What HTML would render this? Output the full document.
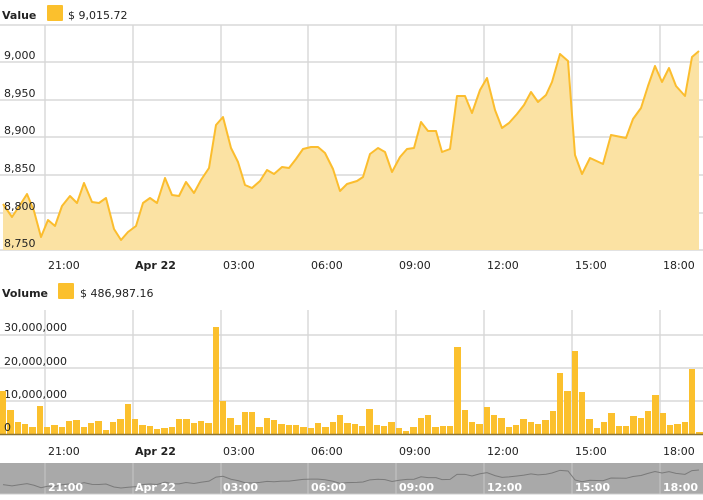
<!DOCTYPE html>
<html><head><meta charset="utf-8"><style>
html,body{margin:0;padding:0;background:#fff;width:703px;height:500px;overflow:hidden;font-family:"DejaVu Sans","Liberation Sans",sans-serif;}
svg{position:absolute;left:0;top:0}
text{font-family:"DejaVu Sans","Liberation Sans",sans-serif;font-size:11px;fill:#222}
.b{font-weight:bold}
#bars{position:absolute;left:0;top:300px;width:703px;height:134px;display:flex;align-items:flex-end}
#bars div{flex:1;background:#fbc02d;margin-right:1px}
</style></head><body>
<svg width="703" height="500">
<g stroke="#e3e3e3" stroke-width="2">
<line x1="45" y1="25" x2="45" y2="250"/><line x1="133" y1="25" x2="133" y2="250"/><line x1="221" y1="25" x2="221" y2="250"/><line x1="308" y1="25" x2="308" y2="250"/><line x1="396" y1="25" x2="396" y2="250"/><line x1="484" y1="25" x2="484" y2="250"/><line x1="572" y1="25" x2="572" y2="250"/><line x1="660" y1="25" x2="660" y2="250"/>
<line x1="45" y1="310" x2="45" y2="434"/><line x1="133" y1="310" x2="133" y2="434"/><line x1="221" y1="310" x2="221" y2="434"/><line x1="308" y1="310" x2="308" y2="434"/><line x1="396" y1="310" x2="396" y2="434"/><line x1="484" y1="310" x2="484" y2="434"/><line x1="572" y1="310" x2="572" y2="434"/><line x1="660" y1="310" x2="660" y2="434"/>
</g>
<g stroke="#d8d8d8" stroke-width="1.5">
<line x1="0" y1="25" x2="703" y2="25"/><line x1="0" y1="62" x2="703" y2="62"/><line x1="0" y1="100" x2="703" y2="100"/><line x1="0" y1="137" x2="703" y2="137"/><line x1="0" y1="175" x2="703" y2="175"/><line x1="0" y1="213" x2="703" y2="213"/><line x1="0" y1="250" x2="703" y2="250"/>
<line x1="0" y1="335" x2="703" y2="335"/><line x1="0" y1="368" x2="703" y2="368"/><line x1="0" y1="401" x2="703" y2="401"/>
</g>
<polygon fill="#fbe2a3" points="3,250 3,204 12,217 20,205 27,194 34,211 41,237 48,220 55,226 62,206 70,196 77,203 84,183 92,202 99,203 106,198 114,229 121,240 128,232 136,226 143,203 150,198 157,203 165,178 172,195 179,196 186,182 194,193 201,180 209,168 216,125 223,117 231,148 238,162 245,185 252,188 260,181 267,170 274,174 282,167 289,168 296,159 303,149 311,147 318,147 325,153 333,169 340,191 347,184 357,181 363,177 370,154 378,148 385,152 392,172 400,157 407,149 414,148 421,122 428,131 436,131 442,152 450,149 457,96 465,96 472,113 480,90 487,78 495,110 502,128 509,123 517,114 524,105 531,92 538,102 546,95 552,82 560,54 568,61 575,155 582,174 590,158 603,164 611,135 626,138 633,119 641,108 648,86 655,66 662,82 669,68 676,86 685,96 692,57 699,51 699,250"/>
<polyline fill="none" stroke="#fbbd2e" stroke-width="2" stroke-linejoin="round" points="3,204 12,217 20,205 27,194 34,211 41,237 48,220 55,226 62,206 70,196 77,203 84,183 92,202 99,203 106,198 114,229 121,240 128,232 136,226 143,203 150,198 157,203 165,178 172,195 179,196 186,182 194,193 201,180 209,168 216,125 223,117 231,148 238,162 245,185 252,188 260,181 267,170 274,174 282,167 289,168 296,159 303,149 311,147 318,147 325,153 333,169 340,191 347,184 357,181 363,177 370,154 378,148 385,152 392,172 400,157 407,149 414,148 421,122 428,131 436,131 442,152 450,149 457,96 465,96 472,113 480,90 487,78 495,110 502,128 509,123 517,114 524,105 531,92 538,102 546,95 552,82 560,54 568,61 575,155 582,174 590,158 603,164 611,135 626,138 633,119 641,108 648,86 655,66 662,82 669,68 676,86 685,96 692,57 699,51"/>
<text x="2" y="19" class="b">Value</text>
<rect x="47" y="5" width="16" height="16" fill="#fbc02d" rx="1"/>
<text x="68" y="19">$ 9,015.72</text>
<text x="4" y="59">9,000</text><text x="4" y="97">8,950</text><text x="4" y="134">8,900</text><text x="4" y="172">8,850</text><text x="4" y="210">8,800</text><text x="4" y="247">8,750</text>
<g>
<text x="48" y="269">21:00</text><text x="135" y="269" class="b">Apr 22</text><text x="223" y="269">03:00</text><text x="311" y="269">06:00</text><text x="399" y="269">09:00</text><text x="487" y="269">12:00</text><text x="575" y="269">15:00</text><text x="663" y="269">18:00</text>
</g>
<text x="2" y="297" class="b">Volume</text>
<rect x="58" y="283" width="16" height="16" fill="#fbc02d" rx="1"/>
<text x="80" y="297">$ 486,987.16</text>
<text x="4" y="331">30,000,000</text><text x="4" y="365">20,000,000</text><text x="4" y="398">10,000,000</text>
<g>
<text x="48" y="455">21:00</text><text x="135" y="455" class="b">Apr 22</text><text x="223" y="455">03:00</text><text x="311" y="455">06:00</text><text x="399" y="455">09:00</text><text x="487" y="455">12:00</text><text x="575" y="455">15:00</text><text x="663" y="455">18:00</text>
</g>
<rect x="0" y="463" width="703" height="31" fill="#a9a9a9"/>
<g stroke="#bcbcbc" stroke-width="1.5"><line x1="45" y1="463" x2="45" y2="494"/><line x1="133" y1="463" x2="133" y2="494"/><line x1="221" y1="463" x2="221" y2="494"/><line x1="308" y1="463" x2="308" y2="494"/><line x1="396" y1="463" x2="396" y2="494"/><line x1="484" y1="463" x2="484" y2="494"/><line x1="572" y1="463" x2="572" y2="494"/><line x1="660" y1="463" x2="660" y2="494"/></g>
<line x1="0" y1="494" x2="703" y2="494" stroke="#ccc"/>
<g transform="translate(0,465.2) scale(1,0.095)"><polyline fill="none" stroke="#7a7a7a" stroke-width="1" vector-effect="non-scaling-stroke" points="3,204 12,217 20,205 27,194 34,211 41,237 48,220 55,226 62,206 70,196 77,203 84,183 92,202 99,203 106,198 114,229 121,240 128,232 136,226 143,203 150,198 157,203 165,178 172,195 179,196 186,182 194,193 201,180 209,168 216,125 223,117 231,148 238,162 245,185 252,188 260,181 267,170 274,174 282,167 289,168 296,159 303,149 311,147 318,147 325,153 333,169 340,191 347,184 357,181 363,177 370,154 378,148 385,152 392,172 400,157 407,149 414,148 421,122 428,131 436,131 442,152 450,149 457,96 465,96 472,113 480,90 487,78 495,110 502,128 509,123 517,114 524,105 531,92 538,102 546,95 552,82 560,54 568,61 575,155 582,174 590,158 603,164 611,135 626,138 633,119 641,108 648,86 655,66 662,82 669,68 676,86 685,96 692,57 699,51"/></g>
<g style="font-weight:bold">
<text x="48" y="491" style="fill:#fff">21:00</text><text x="135" y="491" style="fill:#fff">Apr 22</text><text x="223" y="491" style="fill:#fff">03:00</text><text x="311" y="491" style="fill:#fff">06:00</text><text x="399" y="491" style="fill:#fff">09:00</text><text x="487" y="491" style="fill:#fff">12:00</text><text x="575" y="491" style="fill:#fff">15:00</text><text x="663" y="491" style="fill:#fff">18:00</text>
</g>
</svg>
<div id="bars">
<div style="height:43px"></div><div style="height:24px"></div><div style="height:12px"></div><div style="height:10px"></div><div style="height:7px"></div><div style="height:28px"></div><div style="height:7px"></div><div style="height:9px"></div><div style="height:7px"></div><div style="height:13px"></div><div style="height:14px"></div><div style="height:7px"></div><div style="height:11px"></div><div style="height:13px"></div><div style="height:4px"></div><div style="height:12px"></div><div style="height:15px"></div><div style="height:30px"></div><div style="height:15px"></div><div style="height:9px"></div><div style="height:8px"></div><div style="height:5px"></div><div style="height:6px"></div><div style="height:7px"></div><div style="height:15px"></div><div style="height:15px"></div><div style="height:11px"></div><div style="height:13px"></div><div style="height:11px"></div><div style="height:107px"></div><div style="height:33px"></div><div style="height:16px"></div><div style="height:9px"></div><div style="height:22px"></div><div style="height:22px"></div><div style="height:7px"></div><div style="height:16px"></div><div style="height:14px"></div><div style="height:10px"></div><div style="height:9px"></div><div style="height:9px"></div><div style="height:7px"></div><div style="height:6px"></div><div style="height:11px"></div><div style="height:7px"></div><div style="height:12px"></div><div style="height:19px"></div><div style="height:11px"></div>
<div style="height:10px"></div><div style="height:8px"></div><div style="height:25px"></div><div style="height:9px"></div><div style="height:8px"></div><div style="height:12px"></div><div style="height:6px"></div><div style="height:3px"></div><div style="height:7px"></div><div style="height:16px"></div><div style="height:19px"></div><div style="height:7px"></div><div style="height:8px"></div><div style="height:8px"></div><div style="height:87px"></div><div style="height:24px"></div><div style="height:12px"></div><div style="height:10px"></div><div style="height:27px"></div><div style="height:19px"></div><div style="height:16px"></div><div style="height:7px"></div><div style="height:9px"></div><div style="height:15px"></div><div style="height:12px"></div><div style="height:10px"></div><div style="height:14px"></div><div style="height:23px"></div><div style="height:61px"></div><div style="height:43px"></div><div style="height:83px"></div><div style="height:42px"></div><div style="height:15px"></div><div style="height:6px"></div><div style="height:12px"></div><div style="height:21px"></div><div style="height:8px"></div><div style="height:8px"></div><div style="height:18px"></div><div style="height:16px"></div><div style="height:23px"></div><div style="height:39px"></div><div style="height:21px"></div><div style="height:9px"></div><div style="height:10px"></div><div style="height:12px"></div><div style="height:65px"></div><div style="height:2px"></div>
</div>
<svg width="703" height="500" style="pointer-events:none">
<line x1="0" y1="434.5" x2="703" y2="434.5" stroke="#8c7434" stroke-width="1.5"/>
<text x="4" y="431">0</text>
</svg>
</body></html>
